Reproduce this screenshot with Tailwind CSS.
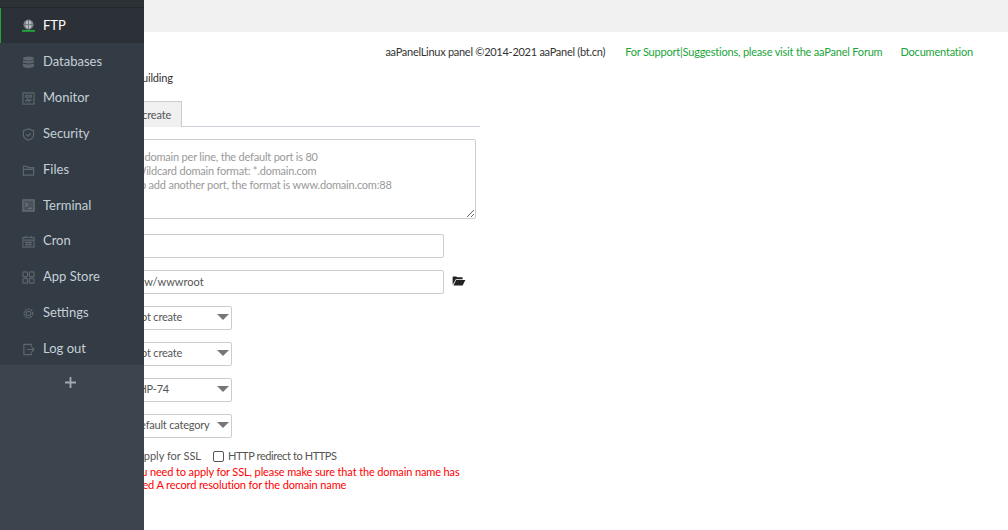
<!DOCTYPE html>
<html><head><meta charset="utf-8"><script src="https://cdn.jsdelivr.net/npm/@tailwindcss/browser@4"></script></head>
<body class="overflow-hidden">
<div class="relative w-[1008px] h-[530px] overflow-hidden bg-white font-['Lato',sans-serif] text-[11px] text-[#555] tracking-[-0.2px]">
  <aside class="absolute left-0 top-0 z-10 w-[144px] h-[530px] flex flex-col bg-[#3c444d] text-[13px] text-[#c5cfd8] tracking-normal">
    <div class="h-[8px] bg-[#2c3138] border-b border-[#23272c]"></div>
    <a class="h-[35px] flex items-center gap-[8px] pl-[21px] bg-[#2c3138] border-l border-[#20a53a] text-white">
      <svg class="w-[13px] h-[13px]" viewBox="0 0 14 14" fill="none" stroke="#6d747b" stroke-width="1"><circle cx="7" cy="6" r="5" fill="#b5bbc0"/><path d="M2 6h10M7 1v10M4 2c-1 3-1 5 0 8M10 2c1 3 1 5 0 8"/><path d="M0 12.800h14" stroke="#20a53a" stroke-width="2"/></svg>
      <span>FTP</span></a>
    <div class="flex flex-col bg-[#333c44] h-[322px] pt-px">
      <a class="h-[36px] shrink-0 flex items-center gap-[8px] pl-[22px]"><svg class="w-[13px] h-[13px]" viewBox="0 0 14 14" fill="#5d666e"><ellipse cx="7" cy="2.800" rx="6" ry="2.300"/><path d="M1 4.400c1.500 1.700 10.500 1.700 12 0v2.300c-1.500 1.700-10.500 1.700-12 0zM1 7.900c1.500 1.700 10.500 1.700 12 0v2.800c-.5 2.800-11.500 2.800-12 0z"/></svg>Databases</a>
      <a class="h-[36px] shrink-0 flex items-center gap-[8px] pl-[22px]"><svg class="w-[13px] h-[13px]" viewBox="0 0 14 14" fill="none" stroke="#5d666e" stroke-width="1.300"><rect x="1" y="1" width="12" height="12"/><path d="M3 9.500h2l1-2 1.500 3 1-2h2.500M4 3.500h6v2H4z"/></svg>Monitor</a>
      <a class="h-[36px] shrink-0 flex items-center gap-[8px] pl-[22px]"><svg class="w-[13px] h-[13px]" viewBox="0 0 14 14" fill="none" stroke="#5d666e" stroke-width="1.300"><path d="M7 1l5.500 1.800v4.700c0 2.800-2.500 4.500-5.500 5.500-3-1-5.500-2.700-5.500-5.500V2.800z"/><path d="M4.500 6.800l2 2 3-3.300"/></svg>Security</a>
      <a class="h-[36px] shrink-0 flex items-center gap-[8px] pl-[22px]"><svg class="w-[13px] h-[13px]" viewBox="0 0 14 14" fill="none" stroke="#5d666e" stroke-width="1.300"><path d="M1.500 12V2.500h4l1.200 1.500h5.800v8zM1.500 5.800h11"/></svg>Files</a>
      <a class="h-[35px] shrink-0 flex items-center gap-[8px] pl-[22px]"><svg class="w-[13px] h-[13px]" viewBox="0 0 14 14" fill="none" stroke="#6a737b" stroke-width="1.300"><rect x="1" y="1" width="12" height="12" fill="#4a535b"/><path d="M3.500 4l2.500 2-2.500 2M6.500 10h4"/></svg>Terminal</a>
      <a class="h-[36px] shrink-0 flex items-center gap-[8px] pl-[22px]"><svg class="w-[13px] h-[13px]" viewBox="0 0 14 14" fill="none" stroke="#5d666e" stroke-width="1.200"><rect x="1" y="2.500" width="12" height="10.500"/><path d="M1 5.500h12M4 1v2.500M10 1v2.500M3 8h8M3 10.500h8M5.500 7v5M8.500 7v5"/></svg>Cron</a>
      <a class="h-[36px] shrink-0 flex items-center gap-[8px] pl-[22px]"><svg class="w-[13px] h-[13px]" viewBox="0 0 14 14" fill="none" stroke="#5d666e" stroke-width="1.300"><rect x="1" y="1" width="5" height="5" rx="1"/><rect x="8" y="1" width="5" height="5" rx="1"/><rect x="1" y="8" width="5" height="5" rx="1"/><rect x="8" y="8" width="5" height="5" rx="1"/></svg>App Store</a>
      <a class="h-[36px] shrink-0 flex items-center gap-[8px] pl-[22px]"><svg class="w-[13px] h-[13px]" viewBox="0 0 14 14" fill="none" stroke="#5d666e" stroke-width="1.500"><circle cx="7" cy="7" r="4.700" stroke-dasharray="2 1"/><circle cx="7" cy="7" r="2.500" stroke-width="1.100"/></svg>Settings</a>
      <a class="h-[36px] shrink-0 flex items-center gap-[8px] pl-[22px]"><svg class="w-[13px] h-[13px]" viewBox="0 0 14 14" fill="none" stroke="#5d666e" stroke-width="1.300"><path d="M10 4V1.500H2v11h8V10M5.500 7H13M10.500 4.500L13 7l-2.500 2.500"/></svg>Log out</a>
    </div>
    <div class="h-[35px] flex items-center justify-center"><svg class="w-[11px] h-[11px] -ml-[4px]" viewBox="0 0 11 11" stroke="#a3abb2" stroke-width="1.800"><path d="M0 5.500h11M5.500 0v11"/></svg></div>
  </aside>

  <div class="h-[32px] bg-[#f0f0f0]"></div>
  <div class="flex justify-end pr-[35px] pt-[12px] h-[36px]">
    <span class="text-[#333] tracking-[-0.27px]">aaPanelLinux panel ©2014-2021 aaPanel (bt.cn)</span>
    <a class="ml-[20px] text-[#20a53a]">For Support|Suggestions, please visit the aaPanel Forum</a>
    <a class="ml-[18px] text-[#20a53a]">Documentation</a>
  </div>
  <div class="pl-[120px]">
    <div class="h-[22px] leading-[20px] text-[#333] -ml-[4px]">Site building</div>
    <div class="h-[11px]"></div>
    <div class="w-[360px] h-[26px] border-b border-[#cfcfdc] flex">
      <div class="w-[62px] h-[26px] border border-b-0 border-[#ccc] bg-[#f0f0f0] flex items-center justify-end pr-[10px] pt-[2px] text-[#555] whitespace-nowrap">Batch create</div>
    </div>
    <textarea class="block mt-[12px] w-[356px] h-[80px] border border-[#ccc] rounded-[2px] pl-[14px] pt-[10px] leading-[14px] outline-none placeholder:text-[#999]" placeholder="A domain per line, the default port is 80
Wildcard domain format: *.domain.com
To add another port, the format is www.domain.com:88"></textarea>
    <div class="mt-[15px] w-[324px] h-[24px] border border-[#ccc] rounded-[2px]"></div>
    <div class="mt-[12px] flex items-center gap-[8px]">
      <input class="w-[324px] h-[24px] border border-[#ccc] rounded-[2px] pl-[1px] pb-[2px] outline-none tracking-normal" value="/www/wwwroot">
      <svg class="w-[14px] h-[10px] -mt-[2px]" viewBox="0 0 14 11" fill="#222"><path d="M0 9.500V1.500C0 .8.500.5 1 .5h3l1 1h5c.5 0 1 .3 1 1v1H3.500L0 9.500zM3.800 4.300H14l-3 6.200H.8z"/></svg>
    </div>
    <div class="mt-[12px] relative w-[112px] h-[24px] border border-[#ccc] rounded-[2px] flex items-center pl-[12px] pb-[2px]">Not create<i class="absolute right-[2px] top-[7px] w-0 h-0 border-x-[6px] border-x-transparent border-t-[6px] border-t-[#777]"></i></div>
    <div class="mt-[12px] relative w-[112px] h-[24px] border border-[#ccc] rounded-[2px] flex items-center pl-[12px] pb-[2px]">Not create<i class="absolute right-[2px] top-[7px] w-0 h-0 border-x-[6px] border-x-transparent border-t-[6px] border-t-[#777]"></i></div>
    <div class="mt-[12px] relative w-[112px] h-[24px] border border-[#ccc] rounded-[2px] flex items-center pl-[11px] pb-[2px]">PHP-74<i class="absolute right-[2px] top-[7px] w-0 h-0 border-x-[6px] border-x-transparent border-t-[6px] border-t-[#777]"></i></div>
    <div class="mt-[12px] relative w-[112px] h-[24px] border border-[#ccc] rounded-[2px] flex items-center pl-[11px] pb-[2px]">Default category<i class="absolute right-[2px] top-[7px] w-0 h-0 border-x-[6px] border-x-transparent border-t-[6px] border-t-[#777]"></i></div>
    <div class="mt-[11px] h-[14px] flex items-center">
      <span class="w-[81px] text-right tracking-normal">Apply for SSL</span>
      <span class="ml-[12px] w-[11px] h-[11px] border border-[#555] rounded-[2px]"></span>
      <span class="ml-[4px] tracking-[-0.4px]">HTTP redirect to HTTPS</span>
    </div>
    <div class="mt-[2px] w-[345px] pl-[5px] indent-[-4px] leading-[13px] text-[#f00] tracking-[-0.13px]">If you need to apply for SSL, please make sure that the domain name has added A record resolution for the domain name</div>
  </div>
</div>
</body></html>
